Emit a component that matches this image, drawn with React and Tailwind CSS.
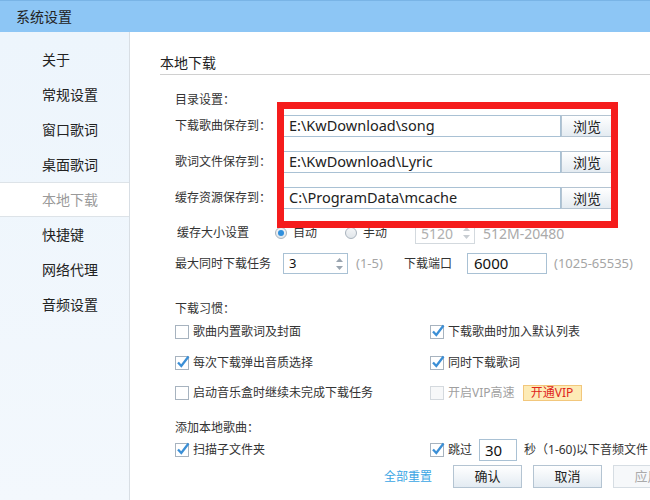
import React from "react";

// sidebar entries of the settings dialog
const menu = ["关于", "常规设置", "窗口歌词", "桌面歌词", "本地下载", "快捷键", "网络代理", "音频设置"];

function Check({ checked, disabled }) {
  return (
    <span
      className={`relative w-[14px] h-[14px] border shrink-0 ${
        disabled ? "border-[#d4d9de] bg-[#f7f8f9]" : "border-[#a7b3bf] bg-white"
      }`}
    >
      {checked && (
        <svg className="absolute -left-[1px] -top-[3px]" width="16" height="16" viewBox="0 0 16 16">
          <path d="M3 8.5 L6.3 12 L13.5 2.5" fill="none" stroke="#3b8fd6" strokeWidth="2.3" />
        </svg>
      )}
    </span>
  );
}

function CheckItem({ checked, disabled, children }) {
  return (
    <div className={`flex items-center gap-[4px] ${disabled ? "text-[#a0a0a0]" : "text-[#333]"}`}>
      <Check checked={checked} disabled={disabled} />
      <span>{children}</span>
    </div>
  );
}

function Radio({ on }) {
  return (
    <span className="w-[12px] h-[12px] rounded-full border border-[#a9b3bd] bg-gradient-to-b from-[#f4f6f8] to-[#e1e6ea] flex items-center justify-center shrink-0">
      {on && <span className="w-[6px] h-[6px] rounded-full bg-[#2f8fdc]" />}
    </span>
  );
}

function Arrows({ light }) {
  const c = light ? "#c8cdd2" : "#9aa5b0";
  return (
    <svg width="9" height="16" viewBox="0 0 9 16" className="shrink-0">
      <path d="M1 6 L4.5 2 L8 6 Z" fill={c} />
      <path d="M1 10 L4.5 14 L8 10 Z" fill={c} />
    </svg>
  );
}

function Browse() {
  return (
    <div className="w-[52px] h-[22px] border border-[#b4c4d2] bg-gradient-to-b from-white to-[#e4ebf1] flex items-center justify-center text-[14px] text-[#222]">
      浏览
    </div>
  );
}

function Btn({ children, disabled }) {
  return (
    <div
      className={`w-[69px] h-[23px] border flex items-center justify-center text-[13px] shrink-0 ${
        disabled
          ? "border-[#d6dde3] bg-[#f6f8fa] text-[#aaa]"
          : "border-[#b4c4d2] bg-gradient-to-b from-white to-[#e3ebf2] text-[#222]"
      }`}
    >
      {children}
    </div>
  );
}

export default function App() {
  const dirs = [
    ["下载歌曲保存到：", "E:\\KwDownload\\song"],
    ["歌词文件保存到：", "E:\\KwDownload\\Lyric"],
    ["缓存资源保存到：", "C:\\ProgramData\\mcache"],
  ];

  return (
    <div className="w-[650px] h-[500px] overflow-hidden bg-white flex flex-col font-['Noto_Sans','Noto_Sans_CJK_SC',sans-serif] text-[12px] text-[#333]">
      {/* title bar */}
      <div className="h-[32px] shrink-0 bg-[#8dc6f5] border-t border-[#79b4e6] flex items-center pl-[16px] text-[14px] text-[#222]">
        系统设置
      </div>

      <div className="flex flex-1 min-h-0">
        {/* sidebar */}
        <aside className="w-[130px] shrink-0 bg-gradient-to-b from-[#edf5fc] to-[#f3f8fd] border-r border-[#d8dee4] pt-[10px]">
          {menu.map((m) => (
            <div
              key={m}
              className={`h-[35px] flex items-center pl-[42px] text-[14px] ${
                m === "本地下载" ? "bg-white border-y border-[#dde3e8] text-[#9a9a9a]" : "text-[#222]"
              }`}
            >
              {m}
            </div>
          ))}
        </aside>

        {/* content */}
        <main className="relative flex-1 pl-[30px] whitespace-nowrap">
          <div className="h-[43px] pt-[21px] leading-[20px] border-b border-[#d0d0d0] text-[14px] text-[#222]">
            本地下载
          </div>

          <div className="pl-[15px]">
            <div className="mt-[16px] h-[18px] leading-[18px]">目录设置：</div>

            <div className="mt-[6px] flex flex-col gap-[14px]">
              {dirs.map(([label, path]) => (
                <div key={label} className="h-[22px] flex items-center">
                  <span className="w-[108px] shrink-0">{label}</span>
                  <div className="w-[278px] h-[22px] border border-[#a9c1d4] flex items-center pl-[5px] text-[14.5px] text-[#222]">
                    {path}
                  </div>
                  <Browse />
                </div>
              ))}
            </div>

            {/* cache size */}
            <div className="mt-[13px] h-[22px] flex items-center pl-[2px]">
              <span className="w-[98px] shrink-0">缓存大小设置</span>
              <div className="w-[70px] flex items-center gap-[6px]">
                <Radio on />
                <span>自动</span>
              </div>
              <div className="w-[70px] flex items-center gap-[6px]">
                <Radio />
                <span>手动</span>
              </div>
              <div className="w-[60px] h-[22px] border border-[#d3d9de] flex items-center justify-between pl-[5px] pr-[3px] text-[14px] text-[#b0b0b0]">
                5120
                <Arrows light />
              </div>
              <span className="ml-[8px] text-[14px] text-[#aaa]">512M-20480</span>
            </div>

            {/* parallel tasks + port */}
            <div className="mt-[9px] h-[21px] flex items-center">
              <span className="w-[108px] shrink-0">最大同时下载任务</span>
              <div className="w-[65px] h-[21px] border border-[#a9c1d4] flex items-center justify-between pl-[5px] pr-[3px] text-[13px] text-[#111]">
                3
                <Arrows />
              </div>
              <span className="ml-[8px] w-[48px] text-[13px] text-[#a5a5a5]">(1-5)</span>
              <span className="w-[63px]">下载端口</span>
              <div className="w-[80px] h-[21px] border border-[#a9c1d4] flex items-center pl-[6px] text-[15px] text-[#111]">
                6000
              </div>
              <span className="ml-[7px] text-[13px] text-[#a5a5a5]">(1025-65535)</span>
            </div>

            <div className="mt-[26px] h-[18px] leading-[18px]">下载习惯：</div>

            <div className="mt-[5px] h-[18px] flex items-center">
              <div className="w-[255px]">
                <CheckItem>歌曲内置歌词及封面</CheckItem>
              </div>
              <CheckItem checked>下载歌曲时加入默认列表</CheckItem>
            </div>
            <div className="mt-[13px] h-[18px] flex items-center">
              <div className="w-[255px]">
                <CheckItem checked>每次下载弹出音质选择</CheckItem>
              </div>
              <CheckItem checked>同时下载歌词</CheckItem>
            </div>
            <div className="mt-[12px] h-[18px] flex items-center">
              <div className="w-[255px]">
                <CheckItem>启动音乐盒时继续未完成下载任务</CheckItem>
              </div>
              <CheckItem disabled>开启VIP高速</CheckItem>
              <span className="ml-[8px] w-[59px] h-[16px] bg-[#fdebb6] border border-[#f2c77c] text-[#e0251b] flex items-center justify-center">
                开通VIP
              </span>
            </div>

            <div className="mt-[17px] h-[18px] leading-[18px]">添加本地歌曲：</div>

            <div className="mt-[2px] h-[22px] flex items-center">
              <div className="w-[255px]">
                <CheckItem checked>扫描子文件夹</CheckItem>
              </div>
              <CheckItem checked>跳过</CheckItem>
              <div className="ml-[7px] w-[38px] h-[22px] border border-[#a9c1d4] flex items-center pl-[5px] text-[15px] text-[#111]">
                30
              </div>
              <span className="ml-[7px] text-[#333]">秒（1-60)以下音频文件</span>
            </div>

            {/* footer */}
            <div className="mt-[4px] h-[23px] flex items-center ml-[209px]">
              <span className="text-[12px] text-[#3aa6e4] w-[69px] shrink-0">全部重置</span>
              <Btn>确认</Btn>
              <div className="w-[11px] shrink-0" />
              <Btn>取消</Btn>
              <div className="w-[11px] shrink-0" />
              <Btn disabled>应用</Btn>
            </div>
          </div>

          {/* red annotation box */}
          <div className="absolute left-[147px] top-[70px] w-[341px] h-[126px] border-[7px] border-[#f51c1c] pointer-events-none" />
        </main>
      </div>
    </div>
  );
}
